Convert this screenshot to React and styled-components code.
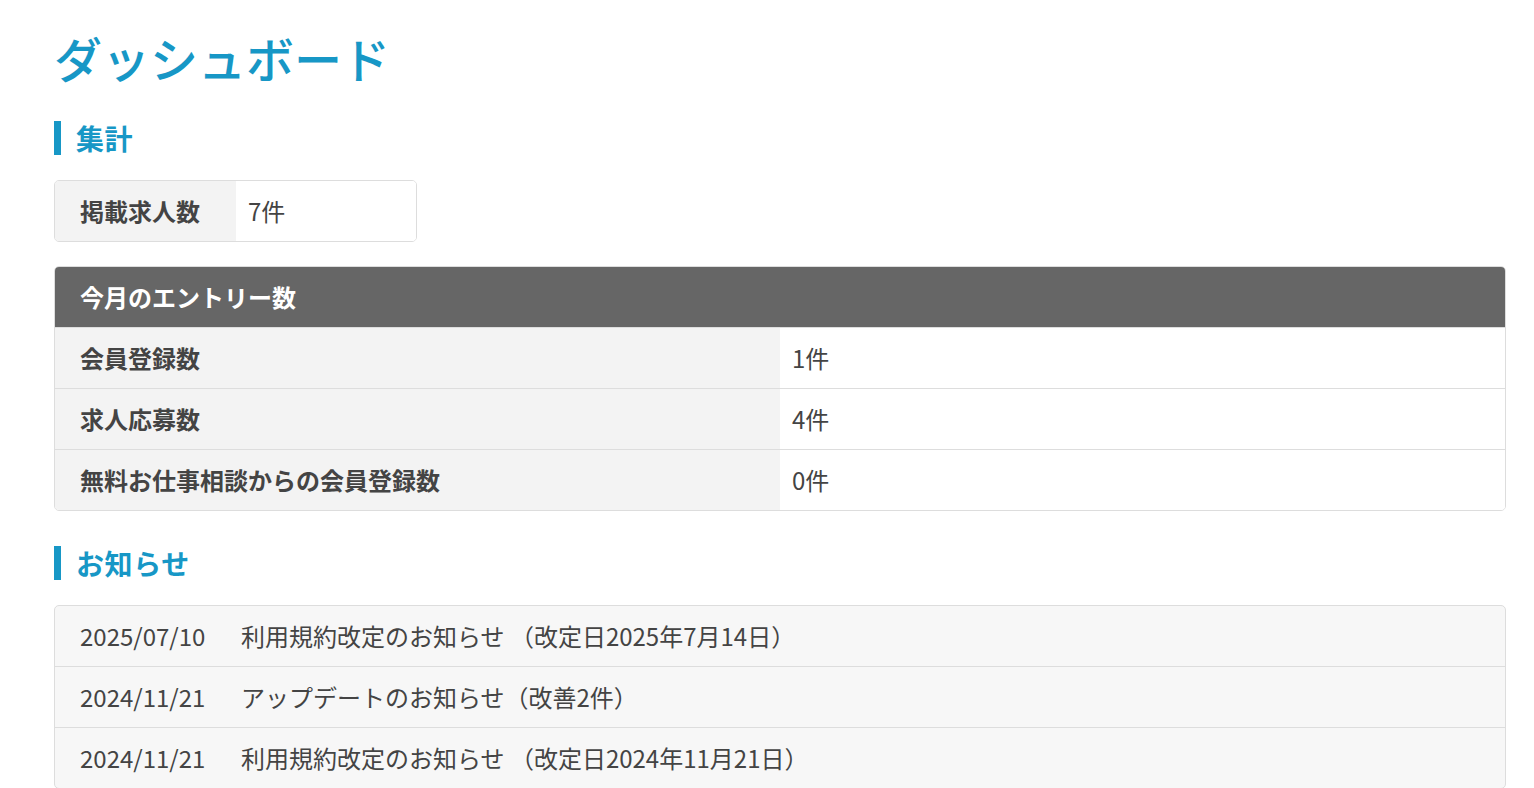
import React from "react"
import styled, { createGlobalStyle } from "styled-components"

const GlobalStyle = createGlobalStyle`
  html, body {
    margin: 0;
    padding: 0;
    background: #fff;
  }
  body {
    font-family: "Noto Sans CJK JP", "Noto Sans", sans-serif;
    color: #444;
  }
`

const Page = styled.main`
  padding: 21px 28px 0 54px;
`

const Title = styled.h1`
  margin: 0 0 28px;
  font-size: 48px;
  line-height: 72px;
  font-weight: 500;
  color: #1797c6;
`

const Section = styled.section`
  & + & {
    margin-top: 35px;
  }
`

const SectionHeading = styled.h2`
  margin: 0 0 25px;
  padding-left: 15px;
  border-left: 7px solid #1797c6;
  font-size: 28px;
  letter-spacing: 0.6px;
  line-height: 34px;
  font-weight: 700;
  color: #1797c6;
`

const Stack = styled.div`
  display: flex;
  flex-direction: column;
  align-items: flex-start;
  gap: 24px;
`

const Card = styled.div`
  align-self: ${(p) => (p.$full ? "stretch" : "flex-start")};
  border: 1px solid #ddd;
  border-radius: 5px;
  overflow: hidden;
  background: ${(p) => p.$bg || "#fff"};
`

const Row = styled.div`
  display: grid;
  grid-template-columns: ${(p) => p.$cols || "1fr 1fr"};
  border-top: ${(p) => (p.$first ? "none" : "1px solid #ddd")};
`

const HeadRow = styled.div`
  background: #666;
  color: #fff;
  font-size: 24px;
  font-weight: 700;
  line-height: 36px;
  padding: 12px 25px;
`

const Label = styled.div`
  background: #f3f3f3;
  font-size: 24px;
  font-weight: 700;
  line-height: 36px;
  padding: 12px 25px;
  color: #444;
`

const Value = styled.div`
  background: #fff;
  font-size: 24px;
  line-height: 36px;
  padding: 12px 12px;
  color: #444;
`

const Notice = styled.div`
  display: flex;
  align-items: center;
  padding: 12px 25px;
  font-size: 24px;
  line-height: 36px;
  color: #444;
  & + & {
    border-top: 1px solid #ddd;
  }
`

const NoticeDate = styled.span`
  flex: none;
  width: 161px;
`

const entries = [
  { label: "会員登録数", value: "1件" },
  { label: "求人応募数", value: "4件" },
  { label: "無料お仕事相談からの会員登録数", value: "0件" },
]

const notices = [
  { date: "2025/07/10", title: "利用規約改定のお知らせ （改定日2025年7月14日）" },
  { date: "2024/11/21", title: "アップデートのお知らせ（改善2件）" },
  { date: "2024/11/21", title: "利用規約改定のお知らせ （改定日2024年11月21日）" },
]

export default function App() {
  return (
    <>
      <GlobalStyle />
      <Page>
        <Title>ダッシュボード</Title>

        <Section>
          <SectionHeading>集計</SectionHeading>
          <Stack>
            <Card>
              <Row $first $cols="181px 180px">
                <Label>掲載求人数</Label>
                <Value>7件</Value>
              </Row>
            </Card>
            <Card $full>
              <HeadRow>今月のエントリー数</HeadRow>
              {entries.map((e) => (
                <Row key={e.label}>
                  <Label>{e.label}</Label>
                  <Value>{e.value}</Value>
                </Row>
              ))}
            </Card>
          </Stack>
        </Section>

        <Section>
          <SectionHeading>お知らせ</SectionHeading>
          <Card $full $bg="#f7f7f7">
            {notices.map((n, i) => (
              <Notice key={i}>
                <NoticeDate>{n.date}</NoticeDate>
                <span>{n.title}</span>
              </Notice>
            ))}
          </Card>
        </Section>
      </Page>
    </>
  )
}
